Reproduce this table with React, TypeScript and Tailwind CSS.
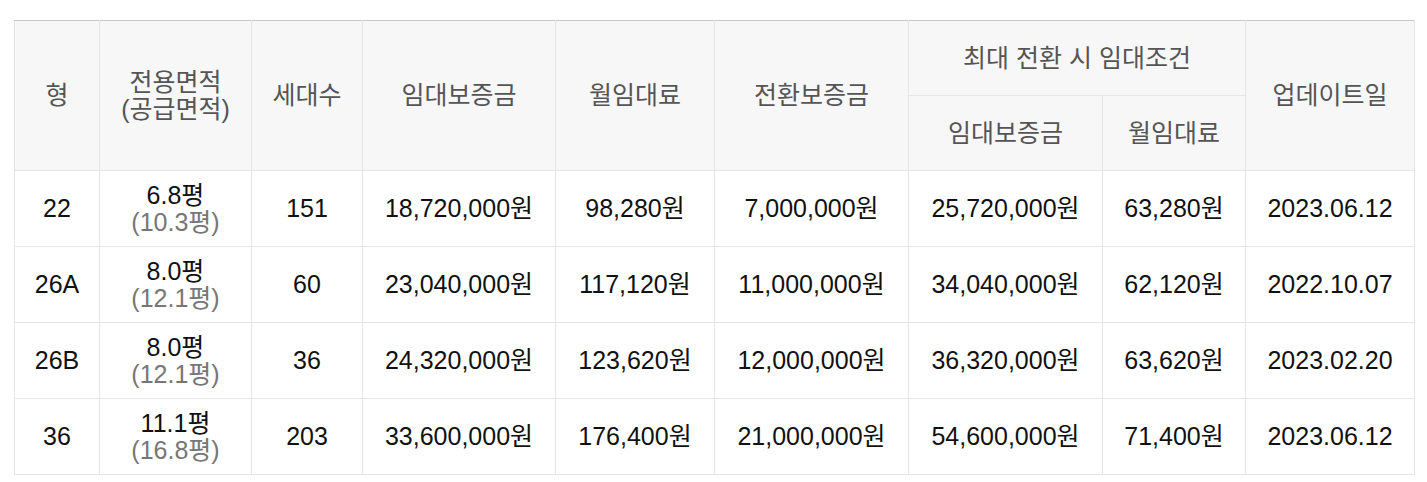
const rows = [
    { type: '22', area: '6.8평', supply: '(10.3평)', units: '151', deposit: '18,720,000원', rent: '98,280원', conv: '7,000,000원', maxDeposit: '25,720,000원', maxRent: '63,280원', updated: '2023.06.12' },
    { type: '26A', area: '8.0평', supply: '(12.1평)', units: '60', deposit: '23,040,000원', rent: '117,120원', conv: '11,000,000원', maxDeposit: '34,040,000원', maxRent: '62,120원', updated: '2022.10.07' },
    { type: '26B', area: '8.0평', supply: '(12.1평)', units: '36', deposit: '24,320,000원', rent: '123,620원', conv: '12,000,000원', maxDeposit: '36,320,000원', maxRent: '63,620원', updated: '2023.02.20' },
    { type: '36', area: '11.1평', supply: '(16.8평)', units: '203', deposit: '33,600,000원', rent: '176,400원', conv: '21,000,000원', maxDeposit: '54,600,000원', maxRent: '71,400원', updated: '2023.06.12' },
];

const th = 'border border-[#e6e6e6] bg-[#f7f7f7] font-normal text-[#555] text-center align-middle';
const td = 'border border-[#e6e6e6] text-center align-middle text-[#111]';

export default function App() {
    return (
        <div
            className="min-h-screen bg-white pl-[14px] pt-[20px]"
            style={{ fontFamily: '"Liberation Sans", "Noto Sans CJK KR", sans-serif' }}
        >
            <table className="w-[1400px] table-fixed border-collapse border-t border-t-[#c9c9c9] text-[25px] leading-[1.05]">
                <colgroup>
                    <col className="w-[85px]" />
                    <col className="w-[152px]" />
                    <col className="w-[111px]" />
                    <col className="w-[193px]" />
                    <col className="w-[159px]" />
                    <col className="w-[194px]" />
                    <col className="w-[194px]" />
                    <col className="w-[143px]" />
                    <col className="w-[169px]" />
                </colgroup>
                <thead>
                    <tr className="h-[75px]">
                        <th rowSpan={2} className={`${th} border-t-[#c9c9c9]`}>형</th>
                        <th rowSpan={2} className={`${th} border-t-[#c9c9c9]`}>
                            전용면적
                            <br />
                            (공급면적)
                        </th>
                        <th rowSpan={2} className={`${th} border-t-[#c9c9c9]`}>세대수</th>
                        <th rowSpan={2} className={`${th} border-t-[#c9c9c9]`}>임대보증금</th>
                        <th rowSpan={2} className={`${th} border-t-[#c9c9c9]`}>월임대료</th>
                        <th rowSpan={2} className={`${th} border-t-[#c9c9c9]`}>전환보증금</th>
                        <th colSpan={2} className={`${th} border-t-[#c9c9c9]`}>최대 전환 시 임대조건</th>
                        <th rowSpan={2} className={`${th} border-t-[#c9c9c9]`}>업데이트일</th>
                    </tr>
                    <tr className="h-[75px]">
                        <th className={th}>임대보증금</th>
                        <th className={th}>월임대료</th>
                    </tr>
                </thead>
                <tbody>
                    {rows.map((row) => (
                        <tr key={row.type} className="h-[76px]">
                            <td className={td}>{row.type}</td>
                            <td className={td}>
                                <div>{row.area}</div>
                                <div className="text-[#777]">{row.supply}</div>
                            </td>
                            <td className={td}>{row.units}</td>
                            <td className={td}>{row.deposit}</td>
                            <td className={td}>{row.rent}</td>
                            <td className={td}>{row.conv}</td>
                            <td className={td}>{row.maxDeposit}</td>
                            <td className={td}>{row.maxRent}</td>
                            <td className={td}>{row.updated}</td>
                        </tr>
                    ))}
                </tbody>
            </table>
        </div>
    );
}
